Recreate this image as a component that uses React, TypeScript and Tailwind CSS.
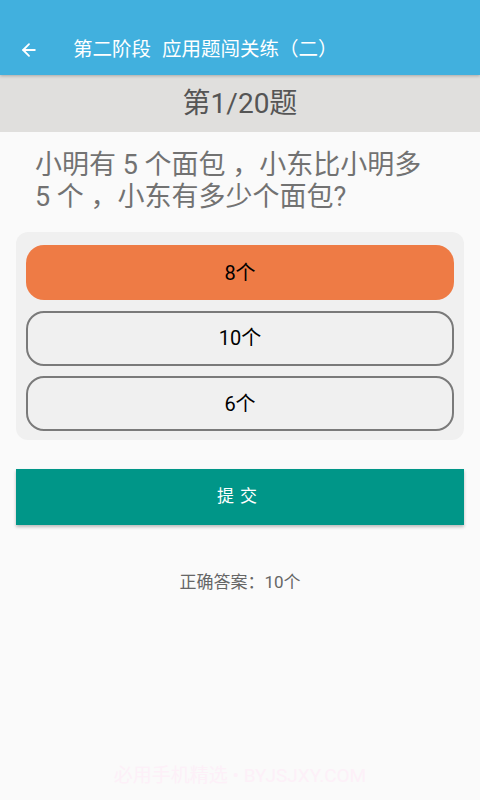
import { ArrowLeft } from "lucide-react";

const options = [
  { label: "8个", selected: true },
  { label: "10个", selected: false },
  { label: "6个", selected: false },
];

function App() {
  return (
    <main
      className="relative flex min-h-[800px] w-full flex-col bg-[#fafafa]"
      style={{ fontFamily: "Roboto, 'Noto Sans CJK SC', sans-serif" }}
    >
      <header className="z-10 flex h-[75px] flex-row items-center bg-[#41b0de] pt-[25px] shadow-[0_1px_3px_rgba(0,0,0,0.25)]">
        <ArrowLeft className="ml-[19px] text-white" size={20} strokeWidth={2.2} />
        <h1 className="ml-[34px] flex flex-row text-[19.5px] leading-none text-white">
          <span>第二阶段</span>
          <span className="ml-[11px]">应用题闯关练（二）</span>
        </h1>
      </header>
      <div className="flex h-[57px] items-center justify-center bg-[#e0dfdd] text-[28px] text-[#555555]">
        第1/20题
      </div>
      <p className="mt-[17px] px-[35px] text-[27px] leading-[32px] text-[#727272]">
        小明有 5 个面包 ，小东比小明多
        <br />5 个 ，小东有多少个面包?
      </p>
      <div className="mx-[16px] mt-[19px] flex flex-col gap-[10.5px] rounded-[12px] bg-[#f0f0f0] px-[10px] pt-[13px] pb-[9px]">
        {options.map((o) =>
          o.selected ? (
            <button
              key={o.label}
              className="flex h-[55px] items-center justify-center rounded-[18px] bg-[#ee7b45] text-[20px] text-black"
            >
              {o.label}
            </button>
          ) : (
            <button
              key={o.label}
              className="flex h-[55px] items-center justify-center rounded-[18px] border-2 border-[#7a7a7a] bg-[#f0f0f0] text-[20px] text-black"
            >
              {o.label}
            </button>
          )
        )}
      </div>
      <button className="mx-[16px] mt-[29px] flex h-[56px] items-center justify-center bg-[#009688] text-[17px] tracking-[6px] text-white shadow-[0_2px_3px_rgba(0,0,0,0.25)]">
        提交
      </button>
      <p className="mt-[45px] text-center text-[17px] leading-[24px] text-[#666666]">
        正确答案：10个
      </p>
      <div className="pointer-events-none absolute bottom-[10px] left-0 right-0 text-center text-[19px] text-[#fdf0f8]">
        必用手机精选 • BYJSJXY.COM
      </div>
    </main>
  );
}

export default App;
